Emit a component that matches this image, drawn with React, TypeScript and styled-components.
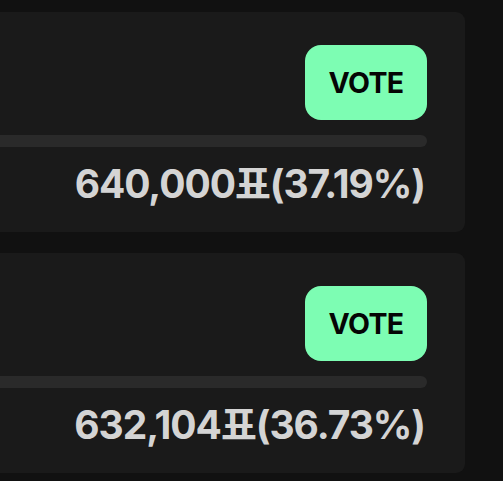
import styled, { createGlobalStyle } from "styled-components";

const GlobalStyle = createGlobalStyle`
  html, body {
    margin: 0;
    padding: 0;
    background: #111111;
    overflow: hidden;
  }
  body {
    font-family: "Inter", "Noto Sans CJK KR", sans-serif;
  }
`;

const List = styled.div`
  display: flex;
  flex-direction: column;
  gap: 21px;
  padding: 12px 38px 0 0;
  margin-left: -60px;
`;

const Card = styled.section`
  background-color: #1a1a1a;
  border-radius: 9px;
  padding: 33px 38px 0 0;
  height: 220px;
  box-sizing: border-box;
  display: flex;
  flex-direction: column;
  align-items: flex-end;
`;

const VoteButton = styled.button`
  width: 122px;
  height: 75px;
  border: none;
  border-radius: 16px;
  background-color: #7dfdb3;
  color: #050505;
  font-family: "Inter", sans-serif;
  font-weight: 700;
  font-size: 28.5px;
  letter-spacing: -0.6px;
  cursor: pointer;
  padding: 0;
`;

const Track = styled.div`
  align-self: stretch;
  height: 12px;
  margin-top: 15px;
  border-radius: 6px;
  background-color: #2a2a2a;
`;

const Count = styled.div`
  margin-top: 13px;
  margin-right: 2px;
  font-size: 39px;
  font-weight: 700;
  line-height: 48px;
  color: #d4d4d4;
  letter-spacing: -1.05px;
  white-space: nowrap;
`;

const items = [
  { votes: "640,000", pct: "37.19" },
  { votes: "632,104", pct: "36.73" },
];

export default function App() {
  return (
    <>
      <GlobalStyle />
      <List>
        {items.map((it) => (
          <Card key={it.votes}>
            <VoteButton>VOTE</VoteButton>
            <Track />
            <Count>
              {it.votes}표({it.pct}%)
            </Count>
          </Card>
        ))}
      </List>
    </>
  );
}
